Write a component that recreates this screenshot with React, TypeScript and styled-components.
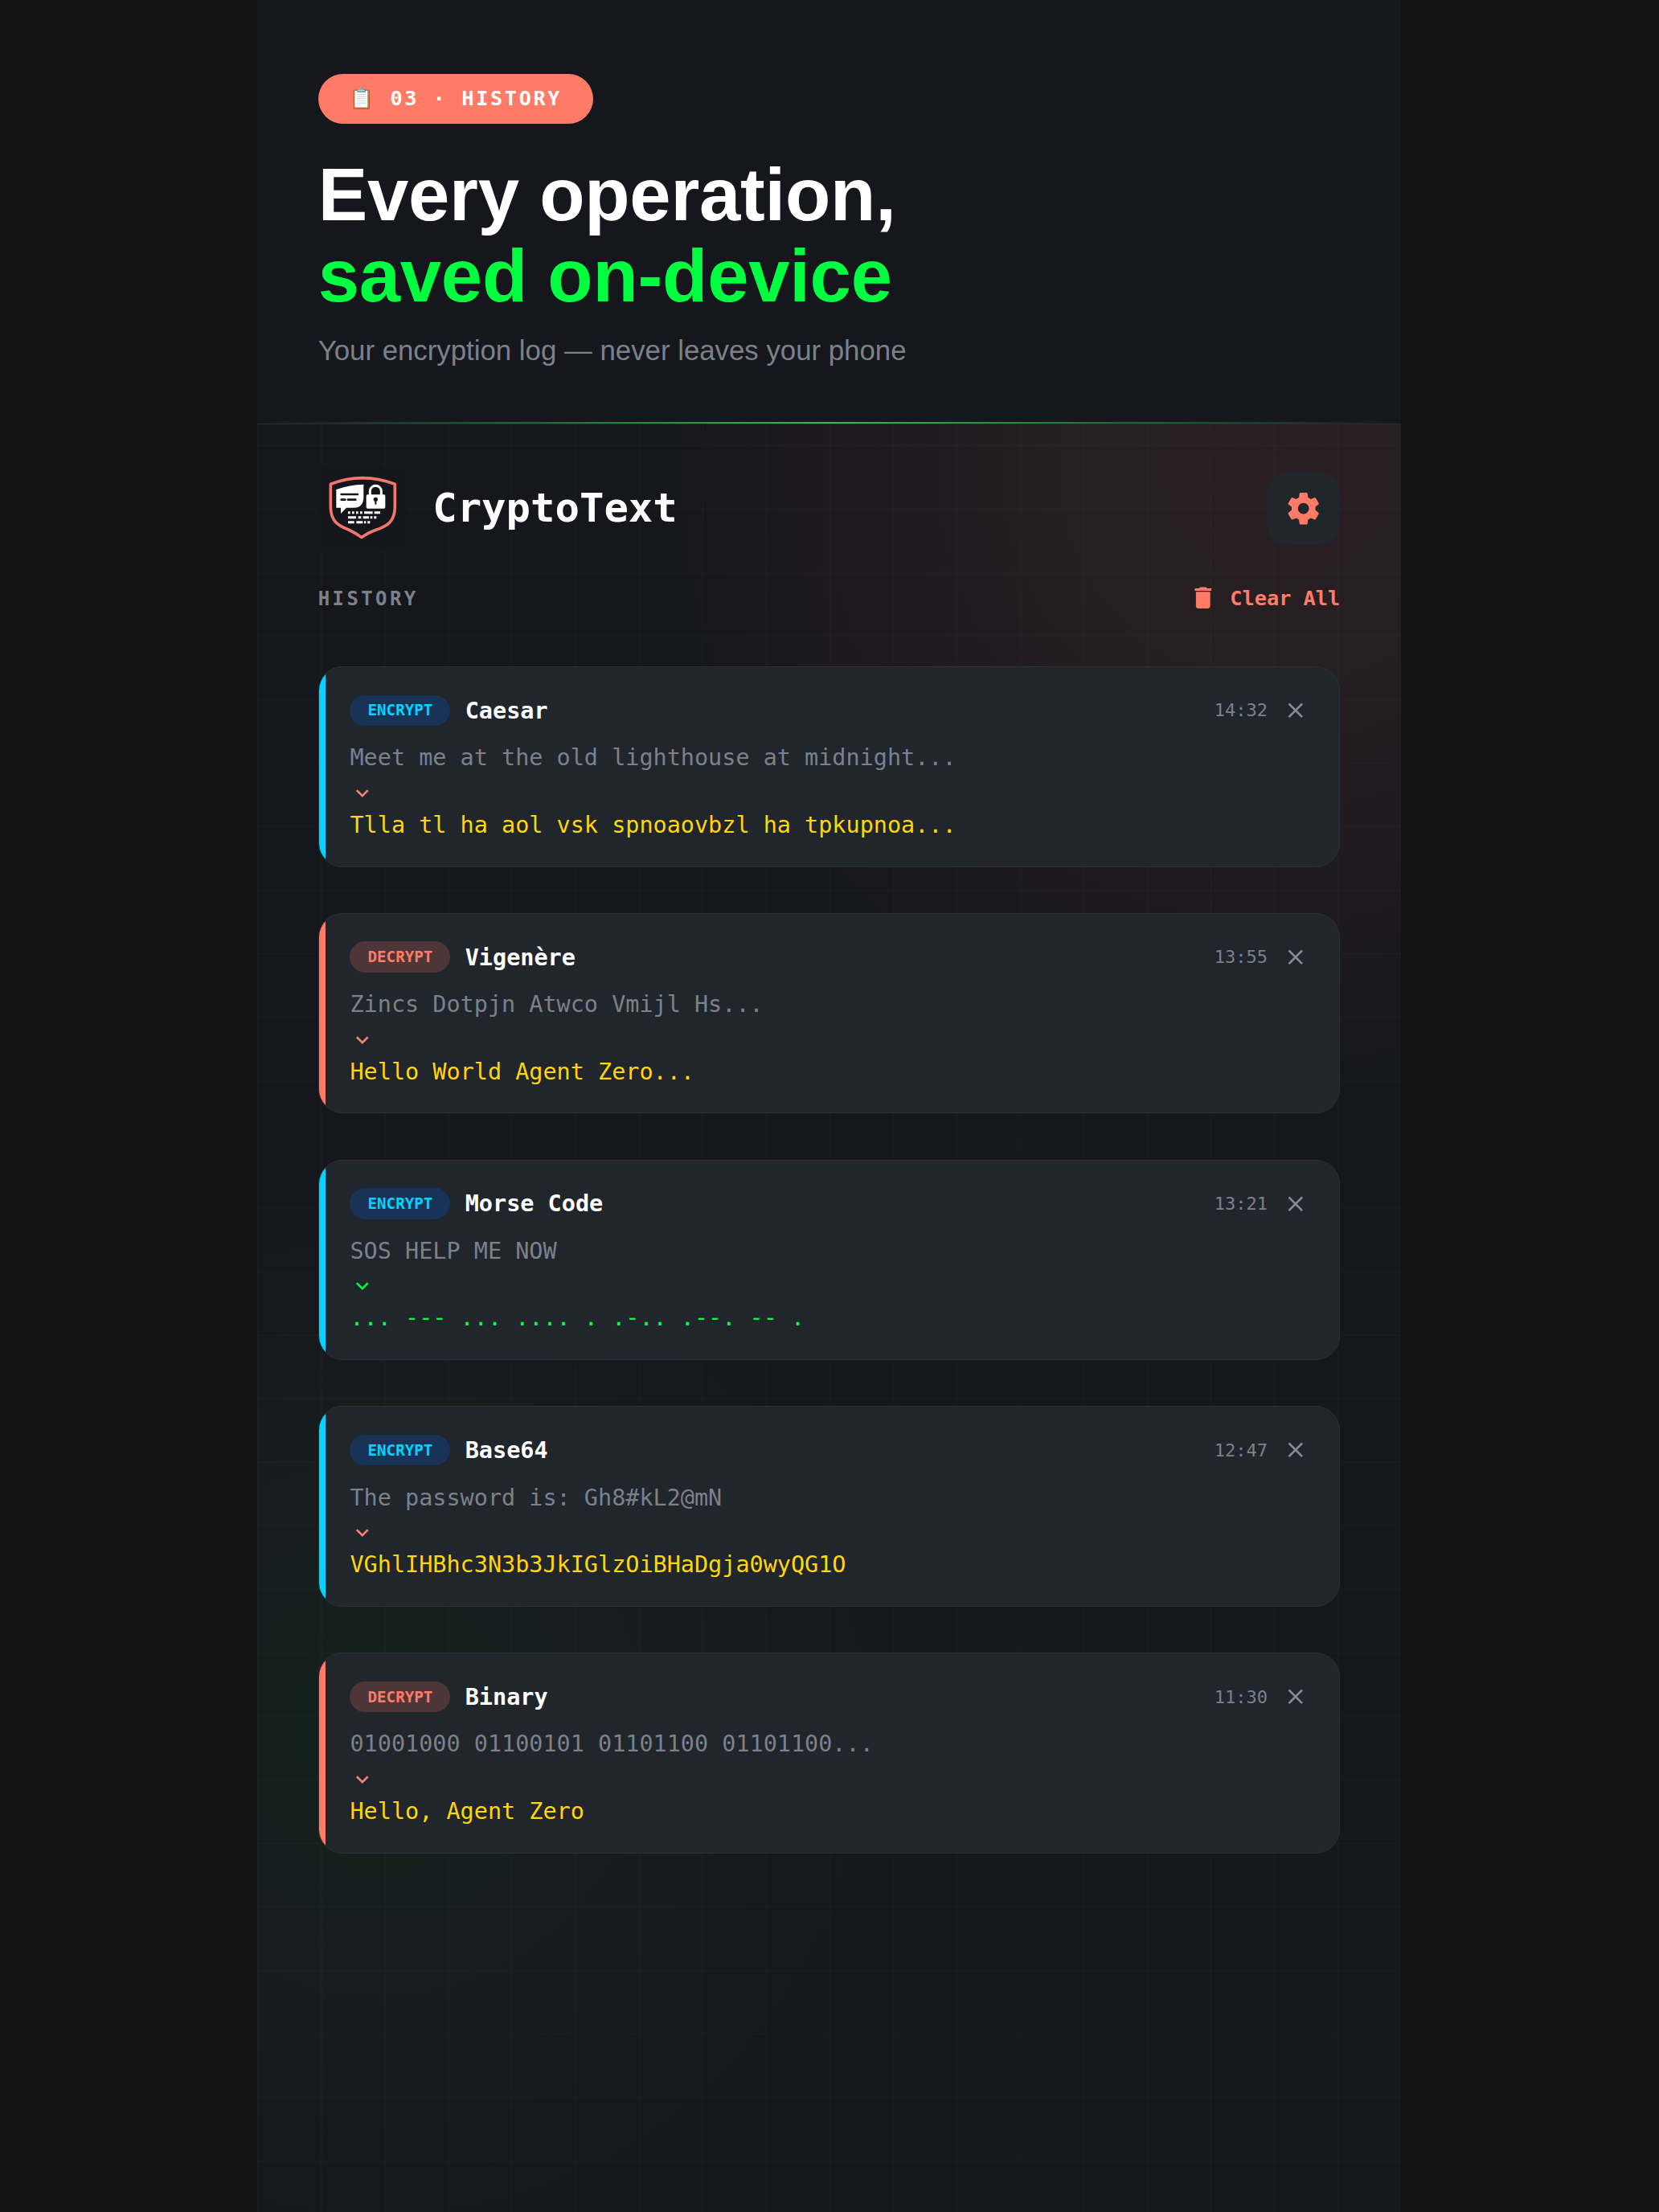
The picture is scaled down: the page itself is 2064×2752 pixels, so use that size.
import React from "react";
import styled, { createGlobalStyle } from "styled-components";

const CORAL = "#ff7b68";
const CYAN = "#00d4ff";
const GREEN = "#00ff41";
const YELLOW = "#ffd60a";
const MUTED = "#7b818b";

const GlobalStyle = createGlobalStyle`
  *, *::before, *::after { box-sizing: border-box; }
  body { margin: 0; background: #121212; }
`;

const mono = `"DejaVu Sans Mono", monospace`;
const sans = `"Liberation Sans", Arial, sans-serif`;

const Page = styled.div`
  display: flex;
  justify-content: center;
  min-height: 2752px;
  padding-right: 1px;
  background: #121212;
`;

const Panel = styled.main`
  display: flex;
  flex-direction: column;
  width: 1423px;
  min-height: 2752px;
  background:
    linear-gradient(rgba(255, 255, 255, 0.011) 1.5px, transparent 1.5px) 0 0 / 79.06px 79.06px,
    linear-gradient(90deg, rgba(255, 255, 255, 0.011) 1.5px, transparent 1.5px) 0 0 / 79.06px 79.06px,
    radial-gradient(circle 800px at 1270px 580px, rgba(255, 123, 104, 0.085), rgba(255, 123, 104, 0.068) 35%, transparent 95%),
    radial-gradient(circle 640px at 150px 2150px, rgba(0, 255, 65, 0.052), transparent 100%),
    #16171c;
`;

const Hero = styled.header`
  position: relative;
  display: flex;
  flex-direction: column;
  align-items: flex-start;
  height: 528px;
  padding: 92px 75.7px 0;
  background: #16171c;
  border-bottom: 1.3px solid #2a2c32;

  &::after {
    content: "";
    position: absolute;
    left: 0;
    right: 0;
    bottom: 0;
    height: 2px;
    background: linear-gradient(90deg, rgba(40, 190, 80, 0), #38b858, rgba(40, 190, 80, 0));
  }
`;

const StepPill = styled.span`
  display: flex;
  align-items: center;
  height: 61.5px;
  padding: 0 39px 0 38.2px;
  border-radius: 40px;
  background: ${CORAL};
  color: #fff;
  font: 700 25.1px ${mono};
  letter-spacing: 2.7px;
  white-space: pre;
`;

const Headline = styled.h1`
  margin: 38px 0 0;
  color: #fff;
  font: 700 92.2px/101.3px ${sans};
  letter-spacing: -0.22px;
`;

const Accent = styled.span`
  display: block;
  color: ${GREEN};
`;

const Tagline = styled.p`
  margin: 22px 0 0;
  color: ${MUTED};
  font: 400 34.8px/40px ${sans};
`;

const AppBar = styled.div`
  display: flex;
  align-items: center;
  height: 110px;
  margin: 49.5px 75.7px 0;
`;

const AppName = styled.h2`
  flex: 1;
  margin: -2px 0 0 32.5px;
  color: #fff;
  font: 700 50.6px ${mono};
`;

const SettingsButton = styled.button`
  display: grid;
  place-items: center;
  width: 91px;
  height: 91px;
  padding: 0;
  border: 0;
  border-radius: 26px;
  background: #20262b;
  color: ${CORAL};
`;

const ListHeader = styled.div`
  display: flex;
  align-items: center;
  justify-content: space-between;
  height: 40px;
  margin: 36.5px 75.7px 0;
`;

const ListTitle = styled.h3`
  margin: 0;
  padding-top: 1px;
  color: ${MUTED};
  font: 700 24px ${mono};
  letter-spacing: 3.4px;
`;

const ClearButton = styled.button`
  display: flex;
  align-items: center;
  gap: 15.5px;
  padding: 0;
  border: 0;
  background: none;
  color: ${CORAL};
  font: 700 25.3px ${mono};
`;

const List = styled.section`
  display: flex;
  flex-direction: column;
  gap: 57.3px;
  margin: 65px 75.7px 0;
`;

const Card = styled.article<{ $bar: string }>`
  position: relative;
  display: flex;
  flex-direction: column;
  height: 249.5px;
  padding: 34.7px 39.2px 0 38.8px;
  overflow: hidden;
  border: 1.3px solid #2d3036;
  border-radius: 30px;
  background: #21252c;

  &::before {
    content: "";
    position: absolute;
    inset: 0 auto 0 0;
    width: 8.6px;
    background: ${(p) => p.$bar};
  }
`;

const CardTop = styled.div`
  display: flex;
  align-items: center;
  height: 38.3px;
`;

const Badge = styled.span<{ $kind: Kind }>`
  display: flex;
  align-items: center;
  height: 38.3px;
  padding: 0 22px;
  border-radius: 20px;
  background: ${(p) => (p.$kind === "ENCRYPT" ? "#183356" : "#4e3638")};
  color: ${(p) => (p.$kind === "ENCRYPT" ? CYAN : CORAL)};
  font: 700 19.2px ${mono};
`;

const Cipher = styled.span`
  flex: 1;
  margin-left: 18.3px;
  padding-top: 1px;
  color: #fff;
  font: 700 28.5px ${mono};
`;

const Time = styled.time`
  margin-right: 18.5px;
  color: ${MUTED};
  font: 400 22px ${mono};
`;

const Line = styled.p<{ $color: string }>`
  margin: 0;
  color: ${(p) => p.$color};
  font: 400 28.48px/43.5px ${mono};
  white-space: pre;
`;

const Source = styled(Line)`
  margin-top: 18.3px;
`;

const ArrowRow = styled.div<{ $color: string }>`
  display: flex;
  height: 31.6px;
  margin: 6px 0 2.4px;
  color: ${(p) => p.$color};
`;

const icons = {
  close: "M19 6.41L17.59 5 12 10.59 6.41 5 5 6.41 10.59 12 5 17.59 6.41 19 12 13.41 17.59 19 19 17.59 13.41 12z",
  expand: "M16.59 8.59L12 13.17 7.41 8.59 6 10l6 6 6-6z",
  trash: "M6 19c0 1.1.9 2 2 2h8c1.1 0 2-.9 2-2V7H6v12zM19 4h-3.5l-1-1h-5l-1 1H5v2h14V4z",
  cog: "M12,15.5A3.5,3.5 0 0,1 8.5,12A3.5,3.5 0 0,1 12,8.5A3.5,3.5 0 0,1 15.5,12A3.5,3.5 0 0,1 12,15.5M19.43,12.97C19.47,12.65 19.5,12.33 19.5,12C19.5,11.67 19.47,11.34 19.43,11L21.54,9.37C21.73,9.22 21.78,8.95 21.66,8.73L19.66,5.27C19.54,5.05 19.27,4.96 19.05,5.05L16.56,6.05C16.04,5.66 15.5,5.32 14.87,5.07L14.5,2.42C14.46,2.18 14.25,2 14,2H10C9.75,2 9.54,2.18 9.5,2.42L9.13,5.07C8.5,5.32 7.96,5.66 7.44,6.05L4.95,5.05C4.73,4.96 4.46,5.05 4.34,5.27L2.34,8.73C2.21,8.95 2.27,9.22 2.46,9.37L4.57,11C4.53,11.34 4.5,11.67 4.5,12C4.5,12.33 4.53,12.65 4.57,12.97L2.46,14.63C2.27,14.78 2.21,15.05 2.34,15.27L4.34,18.73C4.46,18.95 4.73,19.03 4.95,18.95L7.44,17.94C7.96,18.34 8.5,18.68 9.13,18.93L9.5,21.58C9.54,21.82 9.75,22 10,22H14C14.25,22 14.46,21.82 14.5,21.58L14.87,18.93C15.5,18.67 16.04,18.34 16.56,17.94L19.05,18.95C19.27,19.03 19.54,18.95 19.66,18.73L21.66,15.27C21.78,15.05 21.73,14.78 21.54,14.63L19.43,12.97Z",
};

const Icon = ({ name, size, color }: { name: keyof typeof icons; size: number; color?: string }) => (
  <svg width={size} height={size} viewBox="0 0 24 24" fill={color ?? "currentColor"} aria-hidden>
    <path d={icons[name]} />
  </svg>
);

const Logo = () => (
  <svg width="110" height="110" viewBox="47 23 330 330" aria-label="CryptoText logo">
    <rect x="50" y="33" width="330" height="312" fill="#15161b" />
    <path
      d="M93 96 Q150 74 212 73 Q275 74 333 96 V180 C333 236 305 252 262 267 Q230 279 209 295 Q188 279 160 266 C120 250 93 234 93 180 Z"
      fill="none"
      stroke="#f2776b"
      strokeWidth="11"
      strokeLinejoin="round"
    />
    <path d="M114 116 Q164 98 216 97 V148 Q214 183 180 184 H152 L131 206 V184 H114 Z" fill="#fff" />
    <path d="M133 134 H194 M133 154 H147 M158 154 H186" stroke="#16171c" strokeWidth="8" strokeLinecap="round" />
    <path d="M240 137 V122 A21 20 0 0 1 282 122 V137" fill="none" stroke="#fff" strokeWidth="9" />
    <rect x="226" y="135" width="71" height="52" rx="5" fill="#fff" />
    <circle cx="261" cy="153" r="8" fill="#16171c" />
    <path d="M261 153 V172" stroke="#16171c" strokeWidth="6" />
    <g stroke="#fff" strokeWidth="9" fill="none">
      <path d="M158 202 H278" strokeDasharray="8 7 8 7 8 7 8 7 32 6 22" />
      <path d="M158 220 H264" strokeDasharray="30 8 11 7 22 5 8 6 9 20" />
      <path d="M158 238 H240" strokeDasharray="23 8 24 5 7 6 9 20" />
    </g>
  </svg>
);

type Kind = "ENCRYPT" | "DECRYPT";

interface Entry {
  kind: Kind;
  cipher: string;
  time: string;
  source: string;
  result: string;
  green?: boolean;
}

const entries: Entry[] = [
  { kind: "ENCRYPT", cipher: "Caesar", time: "14:32", source: "Meet me at the old lighthouse at midnight...", result: "Tlla tl ha aol vsk spnoaovbzl ha tpkupnoa..." },
  { kind: "DECRYPT", cipher: "Vigenère", time: "13:55", source: "Zincs Dotpjn Atwco Vmijl Hs...", result: "Hello World Agent Zero..." },
  { kind: "ENCRYPT", cipher: "Morse Code", time: "13:21", source: "SOS HELP ME NOW", result: "... --- ... .... . .-.. .--. -- .", green: true },
  { kind: "ENCRYPT", cipher: "Base64", time: "12:47", source: "The password is: Gh8#kL2@mN", result: "VGhlIHBhc3N3b3JkIGlzOiBHaDgja0wyQG1O" },
  { kind: "DECRYPT", cipher: "Binary", time: "11:30", source: "01001000 01100101 01101100 01101100...", result: "Hello, Agent Zero" },
];

const HistoryCard = ({ entry }: { entry: Entry }) => (
  <Card $bar={entry.kind === "ENCRYPT" ? CYAN : CORAL}>
    <CardTop>
      <Badge $kind={entry.kind}>{entry.kind}</Badge>
      <Cipher>{entry.cipher}</Cipher>
      <Time>{entry.time}</Time>
      <Icon name="close" size={31.6} color="#858a93" />
    </CardTop>
    <Source $color={MUTED}>{entry.source}</Source>
    <ArrowRow $color={entry.green ? "#06f245" : "#f47f72"}>
      <Icon name="expand" size={31.6} />
    </ArrowRow>
    <Line $color={entry.green ? GREEN : YELLOW}>{entry.result}</Line>
  </Card>
);

export default function App() {
  return (
    <Page>
      <GlobalStyle />
      <Panel>
        <Hero>
          <StepPill>📋 03 · HISTORY</StepPill>
          <Headline>
            Every operation,
            <Accent>saved on-device</Accent>
          </Headline>
          <Tagline>Your encryption log — never leaves your phone</Tagline>
        </Hero>
        <AppBar>
          <Logo />
          <AppName>CryptoText</AppName>
          <SettingsButton aria-label="Settings">
            <Icon name="cog" size={47.4} />
          </SettingsButton>
        </AppBar>
        <ListHeader>
          <ListTitle>HISTORY</ListTitle>
          <ClearButton>
            <Icon name="trash" size={35.5} />
            Clear All
          </ClearButton>
        </ListHeader>
        <List>
          {entries.map((entry) => (
            <HistoryCard key={entry.cipher} entry={entry} />
          ))}
        </List>
      </Panel>
    </Page>
  );
}
